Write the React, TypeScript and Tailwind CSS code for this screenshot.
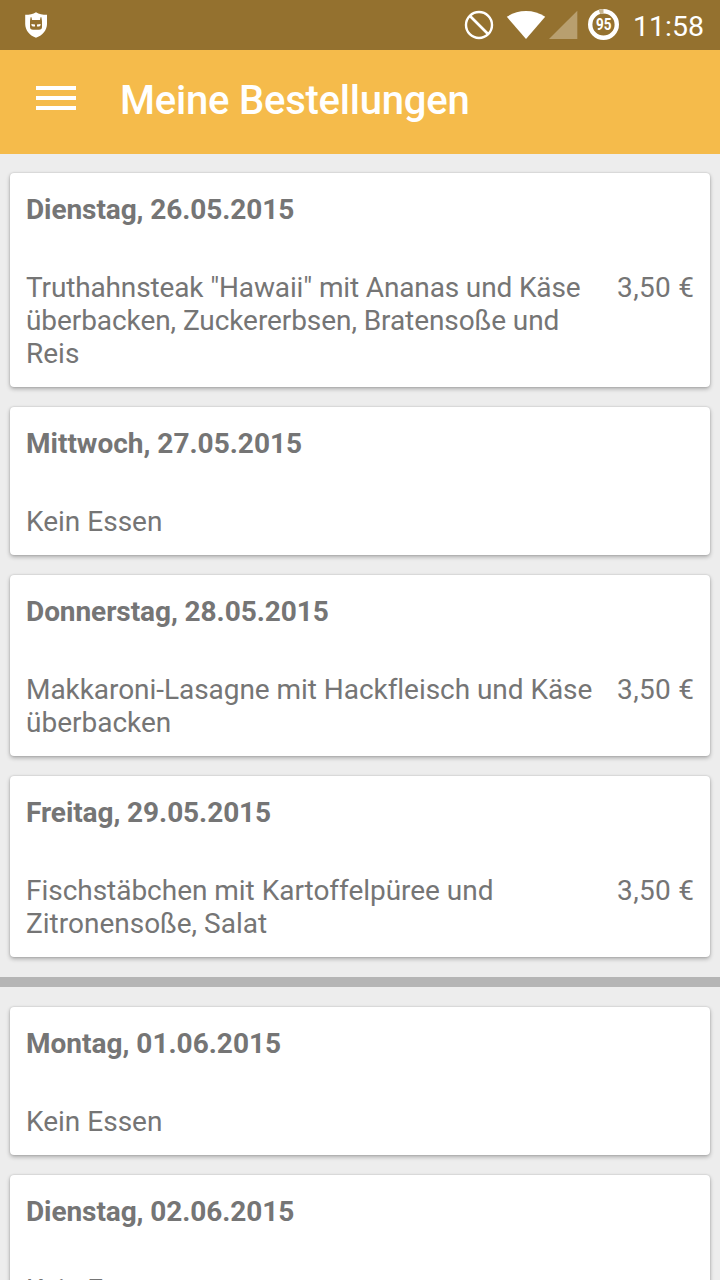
type Line = { text: string; tracking: string };
type Order = { date: string; dateTracking: string; meal: Line[]; price?: string };

const none: Line[] = [{ text: 'Kein Essen', tracking: 'tracking-normal' }];

const thisWeek: Order[] = [
  {
    date: 'Dienstag, 26.05.2015',
    dateTracking: 'tracking-[-0.08px]',
    meal: [
      { text: 'Truthahnsteak "Hawaii" mit Ananas und Käse', tracking: 'tracking-[-0.14px]' },
      { text: 'überbacken, Zuckererbsen, Bratensoße und', tracking: 'tracking-[-0.075px]' },
      { text: 'Reis', tracking: 'tracking-normal' },
    ],
    price: '3,50 €',
  },
  { date: 'Mittwoch, 27.05.2015', dateTracking: 'tracking-normal', meal: none },
  {
    date: 'Donnerstag, 28.05.2015',
    dateTracking: 'tracking-[-0.07px]',
    meal: [
      { text: 'Makkaroni-Lasagne mit Hackfleisch und Käse', tracking: 'tracking-[-0.05px]' },
      { text: 'überbacken', tracking: 'tracking-normal' },
    ],
    price: '3,50 €',
  },
  {
    date: 'Freitag, 29.05.2015',
    dateTracking: 'tracking-[-0.08px]',
    meal: [
      { text: 'Fischstäbchen mit Kartoffelpüree und', tracking: 'tracking-[-0.03px]' },
      { text: 'Zitronensoße, Salat', tracking: 'tracking-normal' },
    ],
    price: '3,50 €',
  },
];

const nextWeek: Order[] = [
  { date: 'Montag, 01.06.2015', dateTracking: 'tracking-normal', meal: none },
  { date: 'Dienstag, 02.06.2015', dateTracking: 'tracking-[-0.08px]', meal: none },
];

function OrderCard({ date, dateTracking, meal, price }: Order) {
  return (
    <article className="rounded-[4px] bg-white px-4 pt-5 pb-[17px] text-[28px] leading-[33px] text-[#757575] shadow-[0_2px_4px_rgba(0,0,0,0.28),0_0_2px_rgba(0,0,0,0.18)]">
      <h2 className={`font-bold ${dateTracking}`}>{date}</h2>
      <div className="mt-[45px] flex justify-between">
        <p className="whitespace-nowrap">
          {meal.map((line) => (
            <span key={line.text} className={`block ${line.tracking}`}>{line.text}</span>
          ))}
        </p>
        {price && <span className="-mr-[0.3px] whitespace-nowrap tracking-[0.3px]">{price}</span>}
      </div>
    </article>
  );
}

function StatusBar() {
  return (
    <div className="flex h-[50px] shrink-0 items-center justify-between bg-[#94712f] pr-4 pl-6 text-white">
      <svg className="h-[50px] w-6" viewBox="24 0 24 50">
        <path d="M36 12.3 C33 14.2 29.5 14.8 25.2 14.8 V24 C25.2 30.5 30 35.6 36 37.8 C42 35.6 47 30.5 47 24 V14.8 C42.5 14.8 39 14.2 36 12.3Z" fill="#fff" />
        <path d="M30.6 17.3 H31.5 L32 20 H40 L40.5 17.3 H41.4 L42 21 V27 Q42 29.8 39 29.8 H33 Q30 29.8 30 27 V21Z" fill="#94712f" />
        <path d="M31.3 24 L35 24.4 V26.6 H32.8 Q31.3 26 31.3 24Z M40.7 24 L37 24.4 V26.6 H39.2 Q40.7 26 40.7 24Z" fill="#fff" />
      </svg>
      <div className="flex items-center">
        <svg className="h-[50px] w-[156px]" viewBox="464 0 156 50">
          <circle cx="479" cy="25" r="13" fill="none" stroke="#fff" strokeWidth="2.4" />
          <path d="M470 16 L488 34" stroke="#fff" strokeWidth="2.6" />
          <path d="M526 39 L506.8 16.8 Q515.5 11 526 11 Q536.5 11 545.2 16.8Z" fill="#fff" />
          <path d="M549 39 L577.3 10.7 V39Z" fill="#b89f6f" />
          <circle cx="603.5" cy="24.5" r="13.3" fill="none" stroke="#fff" strokeWidth="4.4" />
          <path d="M599.4 11.85 A13.3 13.3 0 0 1 603.5 11.2" fill="none" stroke="#c9b68f" strokeWidth="4.6" />
          <text x="603.7" y="30.3" textAnchor="middle" textLength="15.5" lengthAdjust="spacingAndGlyphs" fill="#fff" fontFamily="Roboto, sans-serif" fontSize="16.5" fontWeight="700">95</text>
        </svg>
        <span className="ml-[13px] w-[71px] pt-[3px] text-[28.5px] leading-[50px]">11:58</span>
      </div>
    </div>
  );
}

export default function App() {
  return (
    <div className="flex h-[1280px] w-[720px] flex-col overflow-hidden bg-[#ededed] font-['Roboto',sans-serif]">
      <StatusBar />
      <header className="flex h-[104px] shrink-0 items-center bg-[#f5bb4b] pl-9 text-white">
        <button aria-label="Menü" className="-mt-2 flex w-10 flex-col gap-[6px]">
          <span className="h-1 w-full bg-white" />
          <span className="h-1 w-full bg-white" />
          <span className="h-1 w-full bg-white" />
        </button>
        <h1 className="-mt-[2px] ml-11 text-[40px] leading-[48px] font-medium tracking-[-0.22px]">Meine Bestellungen</h1>
      </header>
      <main className="pt-[19px]">
        <section className="flex flex-col gap-5 px-[10px]">
          {thisWeek.map((order) => <OrderCard key={order.date} {...order} />)}
        </section>
        <div className="my-5 h-[10px] bg-[#b5b5b5]" />
        <section className="flex flex-col gap-5 px-[10px]">
          {nextWeek.map((order) => <OrderCard key={order.date} {...order} />)}
        </section>
      </main>
    </div>
  );
}
